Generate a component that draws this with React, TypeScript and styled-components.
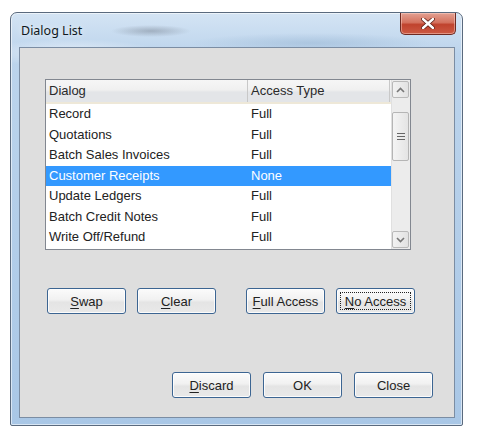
import * as React from 'react'
import styled, { createGlobalStyle } from 'styled-components'

const GlobalStyle = createGlobalStyle`
  html, body {
    margin: 0;
    padding: 0;
    background: #ffffff;
  }
  body {
    font-family: "Liberation Sans", Arial, sans-serif;
  }
`

interface IRow {
  dialog: string
  access: string
}

const rows: IRow[] = [
  { dialog: 'Record', access: 'Full' },
  { dialog: 'Quotations', access: 'Full' },
  { dialog: 'Batch Sales Invoices', access: 'Full' },
  { dialog: 'Customer Receipts', access: 'None' },
  { dialog: 'Update Ledgers', access: 'Full' },
  { dialog: 'Batch Credit Notes', access: 'Full' },
  { dialog: 'Write Off/Refund', access: 'Full' },
]

const Window = styled.div`
  margin: 12px 0 0 10px;
  width: 453px;
  height: 414px;
  box-sizing: border-box;
  border: 1px solid #5a6a7e;
  border-radius: 7px 7px 2px 2px;
  padding: 0 7px 7px 8px;
  display: flex;
  flex-direction: column;
  background:
    radial-gradient(ellipse 40px 6px at 140px 18px, rgba(120, 130, 145, 0.5), transparent),
    radial-gradient(ellipse 120px 10px at 300px 30px, rgba(150, 180, 210, 0.5), transparent),
    radial-gradient(ellipse 90px 14px at 60px 40px, rgba(255, 255, 255, 0.6), transparent),
    linear-gradient(180deg, #d4e4f4 0%, #bcd4ec 10%, #a9c7e6 100%);
  box-shadow: inset 0 0 0 1px rgba(255, 255, 255, 0.55);
`

const TitleBar = styled.div`
  height: 34px;
  display: flex;
  align-items: flex-start;
  justify-content: space-between;
`

const Title = styled.div`
  font-family: "Noto Sans", "Open Sans", sans-serif;
  font-size: 12.5px;
  color: #101820;
  padding: 9px 0 0 2px;
  text-shadow: 0 0 6px rgba(255, 255, 255, 0.9);
`

const CloseButton = styled.div`
  width: 56px;
  height: 22px;
  margin-right: -1px;
  box-sizing: border-box;
  border: 1px solid #6d2a22;
  border-top: none;
  border-radius: 0 0 5px 5px;
  background: linear-gradient(180deg, #e3a193 0%, #d4725f 45%, #c0432e 55%, #cc5a44 100%);
  box-shadow: inset 0 0 0 1px rgba(255, 220, 210, 0.45);
  display: flex;
  align-items: center;
  justify-content: center;
`

const Client = styled.div`
  flex: 1;
  box-sizing: border-box;
  border: 1px solid #7b8da3;
  background: #dedede;
  display: flex;
  flex-direction: column;
  padding: 31px 0 0 25px;
`

const ListBox = styled.div`
  width: 366px;
  height: 171px;
  box-sizing: border-box;
  border: 1px solid #828790;
  background: #ffffff;
  display: flex;
`

const ListBody = styled.div`
  flex: 1;
  display: flex;
  flex-direction: column;
`

const HeaderRow = styled.div`
  height: 22px;
  display: flex;
  background: linear-gradient(180deg, #f6f6f6 0%, #f0f0f0 45%, #e3e5e8 55%, #e3e5e8 100%);
  border-bottom: 2px solid #eee8d8;
`

const HeaderCell = styled.div<{ $w: number }>`
  width: ${p => p.$w}px;
  box-sizing: border-box;
  padding-left: 3px;
  font-size: 13px;
  line-height: 22px;
  color: #2a2a2a;
  border-right: 1px solid #c8c8c8;
  white-space: nowrap;
  overflow: hidden;
`

const Row = styled.div<{ $selected?: boolean }>`
  height: 20.5px;
  display: flex;
  background: ${p => (p.$selected ? '#3399ff' : 'transparent')};
  color: ${p => (p.$selected ? '#ffffff' : '#222222')};
`

const Cell = styled.div<{ $w: number }>`
  width: ${p => p.$w}px;
  box-sizing: border-box;
  padding-left: 3px;
  font-size: 13px;
  line-height: 20.5px;
  white-space: nowrap;
`

const ScrollBar = styled.div`
  width: 19px;
  display: flex;
  flex-direction: column;
  background: #ececec;
  border-left: 1px solid #e0e0e0;
  padding: 1px 1px 1px 0;
  box-sizing: border-box;
`

const ScrollButton = styled.div`
  height: 17px;
  box-sizing: border-box;
  border: 1px solid #b9b9b9;
  border-radius: 2px;
  background: linear-gradient(90deg, #f2f2f2, #e2e2e2);
  display: flex;
  align-items: center;
  justify-content: center;
`

const Track = styled.div`
  flex: 1;
  display: flex;
  flex-direction: column;
  padding-top: 14px;
`

const Thumb = styled.div`
  height: 49px;
  box-sizing: border-box;
  border: 1px solid #b5b5b5;
  border-radius: 2px;
  background: linear-gradient(90deg, #f4f4f4, #e4e4e4);
  display: flex;
  align-items: center;
  justify-content: center;
`

const ButtonRow = styled.div`
  display: flex;
  margin-top: 38px;
  padding-left: 2px;
`

const BottomRow = styled.div`
  display: flex;
  justify-content: flex-end;
  margin-top: 58px;
  padding-right: 21px;
  gap: 12px;
`

const Button = styled.div<{ $gap?: number; $focus?: boolean }>`
  width: 79px;
  height: 26px;
  margin-left: ${p => p.$gap ?? 0}px;
  box-sizing: border-box;
  border: 1px solid #3c6592;
  border-radius: 3px;
  background: linear-gradient(180deg, #fbfbfb 0%, #f1f1f1 45%, #e4e4e4 55%, #e9e9e9 100%);
  box-shadow: inset 0 0 0 1px rgba(255, 255, 255, 0.8);
  display: flex;
  align-items: center;
  justify-content: center;
  font-size: 13px;
  color: #222;
  position: relative;

  &::after {
    content: '';
    display: ${p => (p.$focus ? 'block' : 'none')};
    position: absolute;
    inset: 3px;
    border: 1px dotted #222;
  }
`

const Key = styled.span`
  text-decoration: underline;
  text-underline-offset: 2px;
`

const ChevronUp = () => (
  <svg width="9" height="6" viewBox="0 0 9 6">
    <path d="M1 5 L4.5 1.5 L8 5" fill="none" stroke="#777" strokeWidth="1.6" />
  </svg>
)

const ChevronDown = () => (
  <svg width="9" height="6" viewBox="0 0 9 6">
    <path d="M1 1 L4.5 4.5 L8 1" fill="none" stroke="#777" strokeWidth="1.6" />
  </svg>
)

const Grip = () => (
  <svg width="8" height="7" viewBox="0 0 8 7">
    <path d="M0 0.5 H8 M0 3.5 H8 M0 6.5 H8" stroke="#666" strokeWidth="1" />
  </svg>
)

const CloseX = () => (
  <svg width="14" height="11" viewBox="0 0 14 11">
    <path d="M2 1 L12 10 M12 1 L2 10" stroke="#5a1d14" strokeWidth="4" strokeLinecap="round" />
    <path d="M2 1 L12 10 M12 1 L2 10" stroke="#ffffff" strokeWidth="2.4" strokeLinecap="round" />
  </svg>
)

export default function App() {
  return (
    <>
      <GlobalStyle />
      <Window>
        <TitleBar>
          <Title>Dialog List</Title>
          <CloseButton>
            <CloseX />
          </CloseButton>
        </TitleBar>
        <Client>
          <ListBox>
            <ListBody>
              <HeaderRow>
                <HeaderCell $w={202}>Dialog</HeaderCell>
                <HeaderCell $w={142}>Access Type</HeaderCell>
              </HeaderRow>
              {rows.map(r => (
                <Row key={r.dialog} $selected={r.access === 'None'}>
                  <Cell $w={202}>{r.dialog}</Cell>
                  <Cell $w={142}>{r.access}</Cell>
                </Row>
              ))}
            </ListBody>
            <ScrollBar>
              <ScrollButton>
                <ChevronUp />
              </ScrollButton>
              <Track>
                <Thumb>
                  <Grip />
                </Thumb>
              </Track>
              <ScrollButton>
                <ChevronDown />
              </ScrollButton>
            </ScrollBar>
          </ListBox>

          <ButtonRow>
            <Button><span><Key>S</Key>wap</span></Button>
            <Button $gap={11}><span><Key>C</Key>lear</span></Button>
            <Button $gap={30}><span><Key>F</Key>ull Access</span></Button>
            <Button $gap={11} $focus><span><Key>N</Key>o Access</span></Button>
          </ButtonRow>

          <BottomRow>
            <Button><span><Key>D</Key>iscard</span></Button>
            <Button>OK</Button>
            <Button>Close</Button>
          </BottomRow>
        </Client>
      </Window>
    </>
  )
}
